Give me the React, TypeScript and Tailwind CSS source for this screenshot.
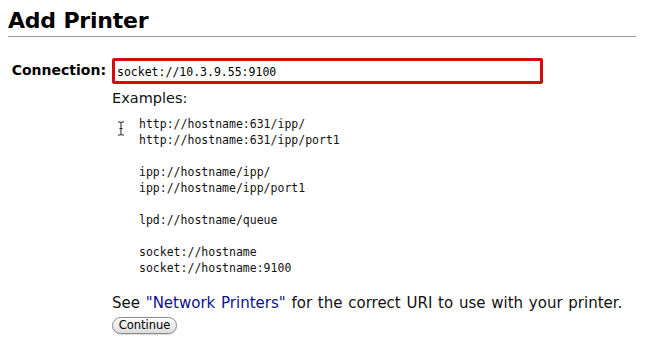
import React from "react";

const examples = [
  "http://hostname:631/ipp/",
  "http://hostname:631/ipp/port1",
  "",
  "ipp://hostname/ipp/",
  "ipp://hostname/ipp/port1",
  "",
  "lpd://hostname/queue",
  "",
  "socket://hostname",
  "socket://hostname:9100",
];

export default function App() {
  return (
    <div className="w-[645px] h-[352px] bg-white text-[#111] overflow-hidden" style={{ fontFamily: '"DejaVu Sans", Verdana, sans-serif' }}>
      <h1 className="ml-[8px] mr-[9px] mt-[8px] pb-[2px] border-b border-[#9a9a9a] text-[22px] leading-[26px] font-bold tracking-[-0.2px] text-black">
        Add Printer
      </h1>
      <div className="flex mt-[21px]">
        <div className="w-[106px] text-right pt-[3px] text-[14px] leading-[18px] font-bold text-black">Connection:</div>
        <div className="ml-[6px] flex flex-col">
          <div className="w-[431px] h-[26px] border-[3px] border-[#d60a0a] rounded-[2px] flex items-center pl-[2px] pt-[1px]">
            <span className="text-[11.5px] leading-[14px] text-black" style={{ fontFamily: '"DejaVu Sans Mono", monospace' }}>
              socket://10.3.9.55:9100
            </span>
          </div>
          <div className="mt-[5px] text-[14.5px] leading-[18px]">Examples:</div>
          <div className="relative mt-[9px] pl-[27px] text-[11.5px] leading-[16px]" style={{ fontFamily: '"DejaVu Sans Mono", monospace' }}>
            {examples.map((e, i) => (
              <div key={i} className="h-[16px] whitespace-pre">{e}</div>
            ))}
            <svg className="absolute left-[5px] top-[5px]" width="8" height="15" viewBox="0 0 8 15">
              <path d="M1 1 H3 Q4 1 4 2 V13 Q4 14 3 14 H1 M7 1 H5 Q4 1 4 2 M4 13 Q4 14 5 14 H7 M2.5 7.5 H5.5" fill="none" stroke="#222" strokeWidth="1" />
            </svg>
          </div>
          <div className="mt-[18px] text-[15px] leading-[18px] whitespace-nowrap [word-spacing:1px]">
            See <a className="text-[#10108a]">"Network Printers"</a> for the correct URI to use with your printer.
          </div>
          <button className="mt-[5px] w-[65px] h-[17px] rounded-full border border-[#8a8a8a] bg-gradient-to-b from-white to-[#dcdcdc] text-[11.5px] leading-[15px] text-black shadow-[0_1px_1px_rgba(0,0,0,0.15)]">
            Continue
          </button>
        </div>
      </div>
    </div>
  );
}
